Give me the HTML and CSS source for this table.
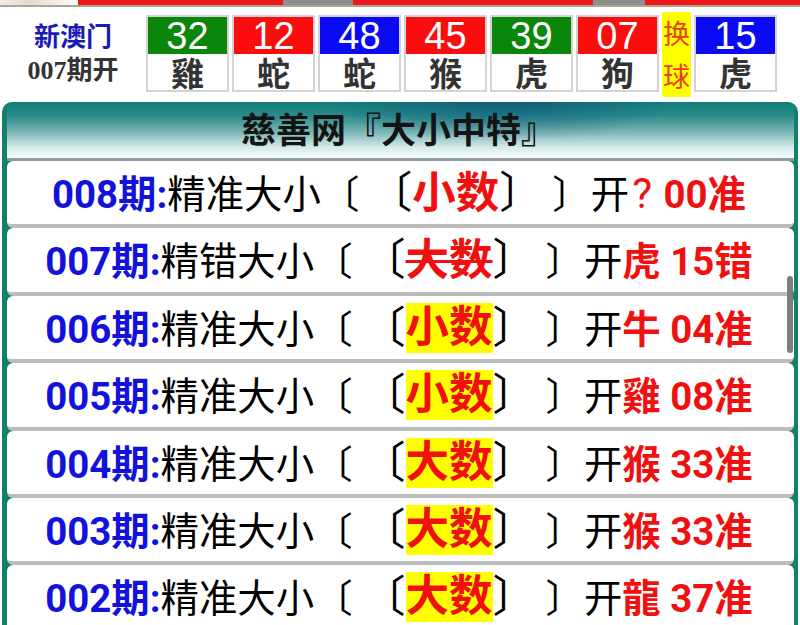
FILE: index.html
```html
<!DOCTYPE html>
<html lang="zh">
<head>
<meta charset="utf-8">
<title>慈善网『大小中特』</title>
<link rel="stylesheet" href="styles.css">
</head>
<body>
<div class="banner">
  <div class="banner-photo"></div>
  <div class="banner-seg red w1"></div>
  <div class="banner-seg gray w2"></div>
  <div class="banner-seg red w3"></div>
  <div class="banner-seg gray w4"></div>
  <div class="banner-seg red grow"></div>
</div>

<header class="draw">
  <div class="draw-label">
    <div class="region">新澳门</div>
    <div class="issue">007期开</div>
  </div>
  <div class="balls">
    <div class="ball"><div class="num green">32</div><div class="zod">雞</div></div>
    <div class="ball"><div class="num red">12</div><div class="zod">蛇</div></div>
    <div class="ball"><div class="num blue">48</div><div class="zod">蛇</div></div>
    <div class="ball"><div class="num red">45</div><div class="zod">猴</div></div>
    <div class="ball"><div class="num green">39</div><div class="zod">虎</div></div>
    <div class="ball"><div class="num red">07</div><div class="zod">狗</div></div>
    <div class="swap"><span>换</span><span>球</span></div>
    <div class="ball"><div class="num blue">15</div><div class="zod">虎</div></div>
  </div>
</header>

<section class="panel">
  <h1 class="panel-title">慈善网『大小中特』</h1>
  <div class="rows">
    <div class="row"><span class="qi">008期:</span>精准大小〔 <span class="big">〔<span class="pick">小数</span>〕</span> 〕开<span class="res"><span class="qmark">?</span> 00准</span></div>
    <div class="row"><span class="qi">007期:</span>精错大小〔 <span class="big">〔<span class="pick strike">大数</span>〕</span> 〕开<span class="res">虎 15错</span></div>
    <div class="row"><span class="qi">006期:</span>精准大小〔 <span class="big">〔<span class="pick hl">小数</span>〕</span> 〕开<span class="res">牛 04准</span></div>
    <div class="row"><span class="qi">005期:</span>精准大小〔 <span class="big">〔<span class="pick hl">小数</span>〕</span> 〕开<span class="res">雞 08准</span></div>
    <div class="row"><span class="qi">004期:</span>精准大小〔 <span class="big">〔<span class="pick hl">大数</span>〕</span> 〕开<span class="res">猴 33准</span></div>
    <div class="row"><span class="qi">003期:</span>精准大小〔 <span class="big">〔<span class="pick hl">大数</span>〕</span> 〕开<span class="res">猴 33准</span></div>
    <div class="row"><span class="qi">002期:</span>精准大小〔 <span class="big">〔<span class="pick hl">大数</span>〕</span> 〕开<span class="res">龍 37准</span></div>
  </div>
</section>

<div class="scroll-thumb"></div>
</body>
</html>
```

FILE: styles.css
```css
* { box-sizing: border-box; }

html, body {
  margin: 0;
  padding: 0;
  background: #ffffff;
  overflow: hidden;
}

body {
  width: 800px;
  font-family: Roboto, "Noto Sans CJK SC", sans-serif;
}

/* top banner strip */
.banner {
  display: flex;
  height: 7px;
  border-bottom: 2px solid #a9a98a;
}
.banner-photo {
  width: 78px;
  background: linear-gradient(90deg, #f3ece8 0%, #e7d8d2 40%, #ffffff 100%);
}
.banner-seg { height: 100%; }
.banner-seg.red { background: #f0141c; }
.banner-seg.gray { background: #8e8e8e; }
.w1 { width: 205px; }
.w2 { width: 70px; }
.w3 { width: 240px; }
.w4 { width: 52px; }
.grow { flex: 1; }

/* draw header */
.draw {
  display: flex;
  align-items: center;
  height: 94px;
}
.draw-label {
  width: 146px;
  display: flex;
  flex-direction: column;
  align-items: center;
  gap: 4px;
  padding-bottom: 2px;
}
.region {
  font-family: "Noto Sans CJK SC", sans-serif;
  font-weight: 700;
  font-size: 26px;
  line-height: 32px;
  color: #1a1ab8;
}
.issue {
  font-family: "Liberation Serif", "Noto Sans CJK SC", serif;
  font-weight: 700;
  font-size: 26px;
  line-height: 32px;
  color: #333333;
}

.balls {
  display: flex;
  align-items: center;
  gap: 3px;
}
.ball {
  width: 83px;
  border: 2px solid #d3d3d3;
  display: flex;
  flex-direction: column;
  margin-top: -1px;
}
.num {
  height: 37px;
  color: #ffffff;
  font-family: "Liberation Sans", Arial, sans-serif;
  font-size: 38px;
  line-height: 37px;
  padding-top: 1px;
  text-align: center;
}
.num.green { background: #0a860a; }
.num.red { background: #fb0d0d; }
.num.blue { background: #0a0af5; }
.zod {
  height: 36px;
  background: #ffffff;
  color: #333333;
  font-family: "Noto Sans CJK SC", sans-serif;
  font-weight: 700;
  font-size: 33px;
  line-height: 36px;
  text-align: center;
}
.swap {
  width: 29px;
  height: 85px;
  background: #ffff00;
  border-radius: 2px;
  display: flex;
  flex-direction: column;
  align-items: center;
  justify-content: space-around;
  color: #e8401a;
  font-family: "Noto Sans CJK SC", sans-serif;
  font-size: 27px;
  line-height: 32px;
  margin-top: 1px;
}

/* panel */
.panel {
  margin: 1px 2px 0 2px;
  padding: 0 4px 0 5px;
  background: #13806f;
  border-radius: 10px 10px 0 0;
}
.panel-title {
  margin: 0;
  height: 59px;
  border-bottom: 3px solid #8b9ca2;
  border-radius: 8px 8px 0 0;
  background:
    radial-gradient(ellipse 22% 70% at 63% 0%, rgba(12, 70, 120, 0.55), rgba(12, 70, 120, 0) 100%),
    linear-gradient(180deg, #117c78 0%, #2a8d8c 25%, #7fb7b7 55%, #d4e9e9 80%, #f6fbfb 100%);
  font-family: "Noto Sans CJK SC", sans-serif;
  font-weight: 700;
  font-size: 35px;
  line-height: 52px;
  color: #141414;
  text-align: center;
  padding-right: 4px;
}

.rows {
  display: flex;
  flex-direction: column;
}
.row {
  height: 67.4px;
  background: #ffffff;
  border-bottom: 4px solid #bcbcbc;
  border-radius: 6px;
  text-align: center;
  white-space: nowrap;
  font-family: Roboto, "Noto Sans CJK SC", sans-serif;
  font-size: 38.4px;
  line-height: 66px;
  color: #000000;
  padding-right: 3px;
}
.qi {
  color: #1212dc;
  font-weight: 700;
}
.big {
  font-size: 43.5px;
}
.pick {
  color: #f01010;
  font-weight: 700;
}
.pick.hl {
  display: inline-block;
  background: #ffff00;
  line-height: 50px;
  vertical-align: 1px;
}
.pick.strike {
  text-decoration: line-through;
  text-decoration-color: #f01010;
  text-decoration-thickness: 3px;
}
.res {
  color: #f01010;
  font-weight: 700;
}
.qmark {
  font-weight: 400;
  font-size: 42px;
  padding: 0 2px 0 3px;
}

/* overlay scrollbar */
.scroll-thumb {
  position: fixed;
  left: 787px;
  top: 276px;
  width: 6px;
  height: 77px;
  background: #7d7d7d;
  border-radius: 3px;
}
```
